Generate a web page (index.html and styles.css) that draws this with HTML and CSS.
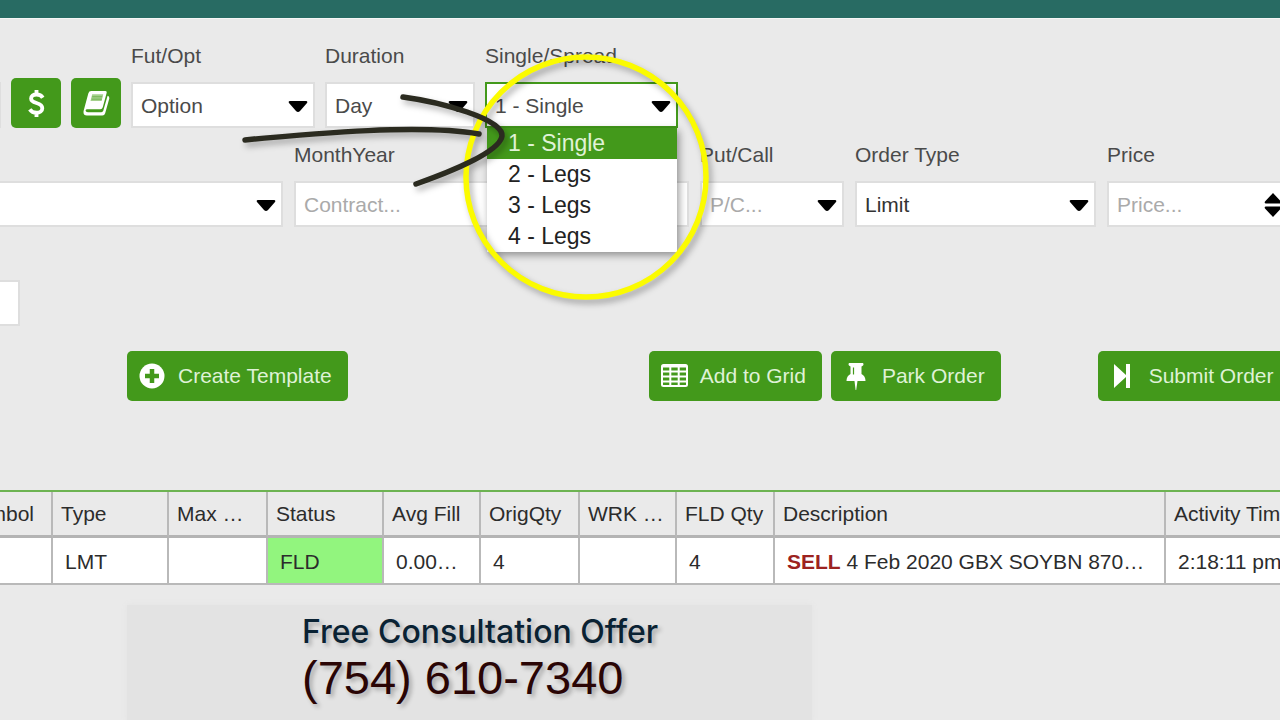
FILE: index.html
```html
<!DOCTYPE html>
<html lang="en">
<head>
    <meta charset="UTF-8">
    <title>Order Entry</title>
    <link rel="stylesheet" href="styles.css">
</head>
<body>
<svg class="sprite" aria-hidden="true">
    <symbol id="caret" viewBox="0 0 20 12">
        <path d="M2 1h16q2 0 1 2l-7 8q-2 2-4 0L1 3Q0 1 2 1z"/>
    </symbol>
</svg>

<header class="topbar"></header>

<main>
    <form class="ticket">
        <div class="ticket-row ticket-row-top">
            <div class="field field-account">
                <label for="account">&nbsp;</label>
                <input type="text" id="account">
            </div>
            <div class="tools">
                <button type="button" class="btn btn-icon" aria-label="Balance">
                    <svg class="icon" viewBox="0 1 26 28"><path d="M19.500 9C18 6.500 15.700 5.700 13 5.700c-3.500 0-5.600 1.700-5.600 4.100 0 2.700 2.300 3.700 5.600 4.700 3.600 1.100 6 2.300 6 5.400 0 2.900-2.500 4.700-6 4.700-3 0-5.300-1-7-3.500M13 1v5M13 24v5" fill="none" stroke="#fff" stroke-width="4"/></svg>
                </button>
                <button type="button" class="btn btn-icon" aria-label="Book">
                    <svg class="icon" viewBox="0 0 28 28">
                        <path d="M8.500 1H23q2 0 1.500 2l-4 15q-.6 2-2.500 2H4.500q-2 0-1.800 1.500.2 1.500 2.300 1.500h14q1.500 0 2-1.500L25.500 6q2.200.8 1.700 3L23 24q-.7 2.500-3 2.500H4Q-.5 26.500.8 21L5.500 3.500Q6.200 1 8.500 1z" fill="#fff"/>
                        <path d="M9.500 4.500h11.500l-1.700 7H7.800z" fill="#a5d08d"/>
                        <path d="M9.500 7h10.500M9 9.500h10.500" stroke="#6fb44f" stroke-width="1"/>
                    </svg>
                </button>
            </div>
            <div class="field field-futopt">
                <label for="futopt">Fut/Opt</label>
                <div class="select">
                    <select id="futopt"><option>Option</option></select>
                    <svg class="caret"><use href="#caret"/></svg>
                </div>
            </div>
            <div class="field field-duration">
                <label for="duration">Duration</label>
                <div class="select">
                    <select id="duration"><option>Day</option></select>
                    <svg class="caret"><use href="#caret"/></svg>
                </div>
            </div>
            <div class="field field-spread">
                <label for="spread">Single/Spread</label>
                <div class="select is-open">
                    <select id="spread"><option>1 - Single</option></select>
                    <svg class="caret"><use href="#caret"/></svg>
                    <ul class="options" role="listbox">
                        <li class="selected" role="option" aria-selected="true">1 - Single</li>
                        <li role="option">2 - Legs</li>
                        <li role="option">3 - Legs</li>
                        <li role="option">4 - Legs</li>
                    </ul>
                </div>
            </div>
        </div>

        <div class="ticket-row">
            <div class="field field-contract">
                <label for="contract">&nbsp;</label>
                <div class="select">
                    <select id="contract"><option></option></select>
                    <svg class="caret"><use href="#caret"/></svg>
                </div>
            </div>
            <div class="field field-month">
                <label for="month">MonthYear</label>
                <input type="text" id="month" placeholder="Contract...">
            </div>
            <div class="field field-putcall">
                <label for="putcall">Put/Call</label>
                <div class="select">
                    <select id="putcall" class="empty"><option>P/C...</option></select>
                    <svg class="caret"><use href="#caret"/></svg>
                </div>
            </div>
            <div class="field field-type">
                <label for="type">Order Type</label>
                <div class="select">
                    <select id="type" class="dark"><option>Limit</option></select>
                    <svg class="caret"><use href="#caret"/></svg>
                </div>
            </div>
            <div class="field field-price">
                <label for="price">Price</label>
                <div class="select">
                    <input type="text" id="price" placeholder="Price...">
                    <svg class="spinner" viewBox="0 0 18 24"><path d="M9 0l8 8.500q1 2-1 2H2q-2 0-1-2zM9 24l8-8.500q1-2-1-2H2q-2 0-1 2z"/></svg>
                </div>
            </div>
        </div>

        <div class="ticket-row">
            <div class="field field-note">
                <label for="note">&nbsp;</label>
                <input type="text" id="note">
            </div>
        </div>
    </form>

    <div class="actions">
        <button type="button" class="btn btn-template">
            <svg class="icon" viewBox="0 0 27 27"><circle cx="13" cy="13" r="12.500" fill="#fff"/><path d="M13 6v14M6 13h14" stroke="#43991b" stroke-width="4.500"/></svg>
            Create Template
        </button>
        <button type="button" class="btn">
            <svg class="icon" viewBox="0 0 27 27"><rect x="1" y="2" width="25" height="21" rx="1.500" fill="none" stroke="#fff" stroke-width="2"/><path d="M1 3.500h25M1 8.500h25M1 13.500h25M1 18.500h25M9.300 3v20M17.700 3v20" stroke="#fff" stroke-width="2"/></svg>
            Add to Grid
        </button>
        <button type="button" class="btn">
            <svg class="icon" viewBox="0 0 27 27"><path d="M6 0h14q1.500 2-1.500 3.500v7.500q4 2 4 7H14.500L13.200 27h-.6L11.500 18H3.500q0-5 4-7V3.500Q4.500 2 6 0z" fill="#fff"/><path d="M10.500 4.500v7" stroke="#43991b" stroke-width="1.200"/></svg>
            Park Order
        </button>
        <button type="button" class="btn btn-submit">
            <svg class="icon" viewBox="0 0 27 27"><path d="M4 1l12 11V1h4v24h-4V14L4 25z" fill="#fff"/></svg>
            Submit Order (
        </button>
    </div>

    <div class="orders">
        <table>
            <colgroup>
                <col class="c-symbol"><col class="c-type"><col class="c-max"><col class="c-status"><col class="c-avg">
                <col class="c-orig"><col class="c-wrk"><col class="c-fld"><col class="c-desc"><col>
            </colgroup>
            <thead>
                <tr>
                    <th>Symbol</th>
                    <th>Type</th>
                    <th>Max …</th>
                    <th>Status</th>
                    <th>Avg Fill</th>
                    <th>OrigQty</th>
                    <th>WRK …</th>
                    <th>FLD Qty</th>
                    <th>Description</th>
                    <th>Activity Time</th>
                </tr>
            </thead>
            <tbody>
                <tr>
                    <td></td>
                    <td>LMT</td>
                    <td></td>
                    <td class="filled">FLD</td>
                    <td>0.00…</td>
                    <td>4</td>
                    <td></td>
                    <td>4</td>
                    <td><b class="sell">SELL</b> 4 Feb 2020 GBX SOYBN 870…</td>
                    <td>2:18:11 pm</td>
                </tr>
            </tbody>
        </table>
    </div>

    <section class="offer">
        <h2>Free Consultation Offer</h2>
        <p>(754) 610-7340</p>
    </section>
</main>

<!-- Hand drawn arrow and circle over the open list -->
<svg class="marker" width="480" height="260" viewBox="240 50 480 260" aria-hidden="true">
    <circle cx="586" cy="177" r="120" stroke="#fbfb00" stroke-width="5.500"/>
    <path d="M245 140C320 133 420 124 479 134" stroke="#2b2b20" stroke-width="5.500"/>
    <path d="M403 97C440 102 504 119 502 136C500 152 450 172 416 184" stroke="#2b2b20" stroke-width="5.500"/>
</svg>
</body>
</html>
```

FILE: styles.css
```css
* {
    box-sizing: border-box;
}

body {
    margin: 0;
    position: relative;
    min-height: 100vh;
    overflow: hidden;
    background-color: #eaeaea;
    font-family: "Liberation Sans", Arial, sans-serif;
    font-size: 21px;
    line-height: 24px;
    color: #4a4a4a;
}

.sprite {
    position: absolute;
    width: 0;
    height: 0;
}

.topbar {
    height: 19px;
    background-color: #286b63;
    border-bottom: 1px solid #f6f6f6;
}

/* Order ticket, scrolled a little to the right */
.ticket {
    margin: 25px -100px 0 -200px;
    display: flex;
    flex-direction: column;
    gap: 15px;
}

.ticket-row {
    display: flex;
    align-items: flex-end;
    gap: 11px;
}

.ticket-row-top {
    gap: 10px;
}

.field {
    flex: none;
    display: flex;
    flex-direction: column;
    gap: 14px;
}

.field-account { width: 201px; }
.field-futopt { width: 184px; }
.field-duration { width: 150px; }
.field-spread { width: 193px; }
.field-contract { width: 483px; }
.field-month { width: 395px; }
.field-putcall { width: 144px; }
.field-type { width: 241px; }
.field-price { width: 184px; }
.field-note { width: 220px; }

input,
select {
    appearance: none;
    width: 100%;
    height: 46px;
    margin: 0;
    padding: 2px 8px 0;
    border: 2px solid #dedede;
    border-radius: 0;
    background-color: #fff;
    font: inherit;
    color: #4a4a4a;
}

select.dark {
    color: #333;
}

select.empty,
input::placeholder {
    color: #aaa;
}

.select {
    position: relative;
    display: grid;
    align-items: center;
}

.select > select,
.select > input,
.caret,
.spinner {
    grid-area: 1 / 1;
}

.caret,
.spinner {
    justify-self: end;
    margin-top: 2px;
    margin-right: 7px;
    width: 20px;
    height: 12px;
    fill: #000;
    pointer-events: none;
}

.spinner {
    width: 18px;
    height: 24px;
    margin-right: 9px;
}

.is-open select {
    border-color: #43991b;
}

.options {
    position: absolute;
    z-index: 1;
    top: 100%;
    left: 2px;
    right: 1px;
    margin: 0;
    padding: 0;
    list-style: none;
    background-color: #fff;
    color: #222;
    font-size: 23px;
    line-height: 31px;
    box-shadow: 2px 3px 8px rgba(0, 0, 0, 0.4);
}

.options li {
    padding-left: 21px;
}

.options .selected {
    background-color: #43991b;
    color: #e0f3d6;
}

/* Buttons */
.tools {
    display: flex;
    gap: 10px;
}

.btn {
    flex: none;
    display: flex;
    align-items: center;
    gap: 12px;
    height: 50px;
    padding: 0 16px 0 12px;
    border: 0;
    border-radius: 5px;
    background-color: #43991b;
    color: #dff2d6;
    font: inherit;
    white-space: nowrap;
}

.btn .icon {
    width: 27px;
    height: 27px;
}

.btn-icon {
    justify-content: center;
    width: 50px;
    padding: 0;
}

.actions {
    display: flex;
    gap: 9px;
    margin-top: 25px;
    padding-left: 127px;
}

.btn-template {
    margin-right: 292px;
}

.btn-submit {
    margin-left: 88px;
}

/* Orders grid */
.orders {
    margin-top: 89px;
    overflow: hidden;
    border-top: 2px solid #6db352;
}

table {
    width: calc(100% + 84px);
    margin-left: -44px;
    table-layout: fixed;
    border-collapse: separate;
    border-spacing: 0;
    color: #2c2c2c;
}

.c-symbol { width: 97px; }
.c-type { width: 116px; }
.c-max { width: 99px; }
.c-status { width: 116px; }
.c-avg { width: 97px; }
.c-orig { width: 99px; }
.c-wrk { width: 97px; }
.c-fld { width: 98px; }
.c-desc { width: 391px; }

th,
td {
    overflow: hidden;
    padding: 0 8px;
    border-right: 2px solid #b9b9b9;
    text-align: left;
    white-space: nowrap;
}

th {
    height: 46px;
    border-bottom: 3px solid #b4b4b4;
    font-weight: normal;
}

td {
    height: 47px;
    padding: 2px 0 0 12px;
    border-bottom: 2px solid #b9b9b9;
    background-color: #fff;
}

td.filled {
    background-color: #92f57e;
}

.sell {
    color: #9c2220;
}

/* Contact banner */
.offer {
    width: 685px;
    max-width: 100%;
    margin: 20px 0 0 127px;
    padding: 10px 0 14px 175px;
    background-color: #e3e3e3;
    box-shadow: 0 0 6px #e3e3e3;
}

.offer h2,
.offer p {
    margin: 0;
    text-shadow: 3px 3px 4px rgba(0, 0, 0, 0.25);
}

.offer h2 {
    font-family: Inter, "Open Sans", sans-serif;
    font-size: 32px;
    font-weight: 500;
    line-height: 33px;
    color: #0a2233;
}

.offer p {
    font-size: 47px;
    line-height: 60px;
    color: #2a0505;
}

.marker {
    position: absolute;
    z-index: 2;
    top: 50px;
    left: 240px;
    fill: none;
    stroke-linecap: round;
    pointer-events: none;
    filter: drop-shadow(3px 4px 3px rgba(0, 0, 0, 0.3));
}
```
